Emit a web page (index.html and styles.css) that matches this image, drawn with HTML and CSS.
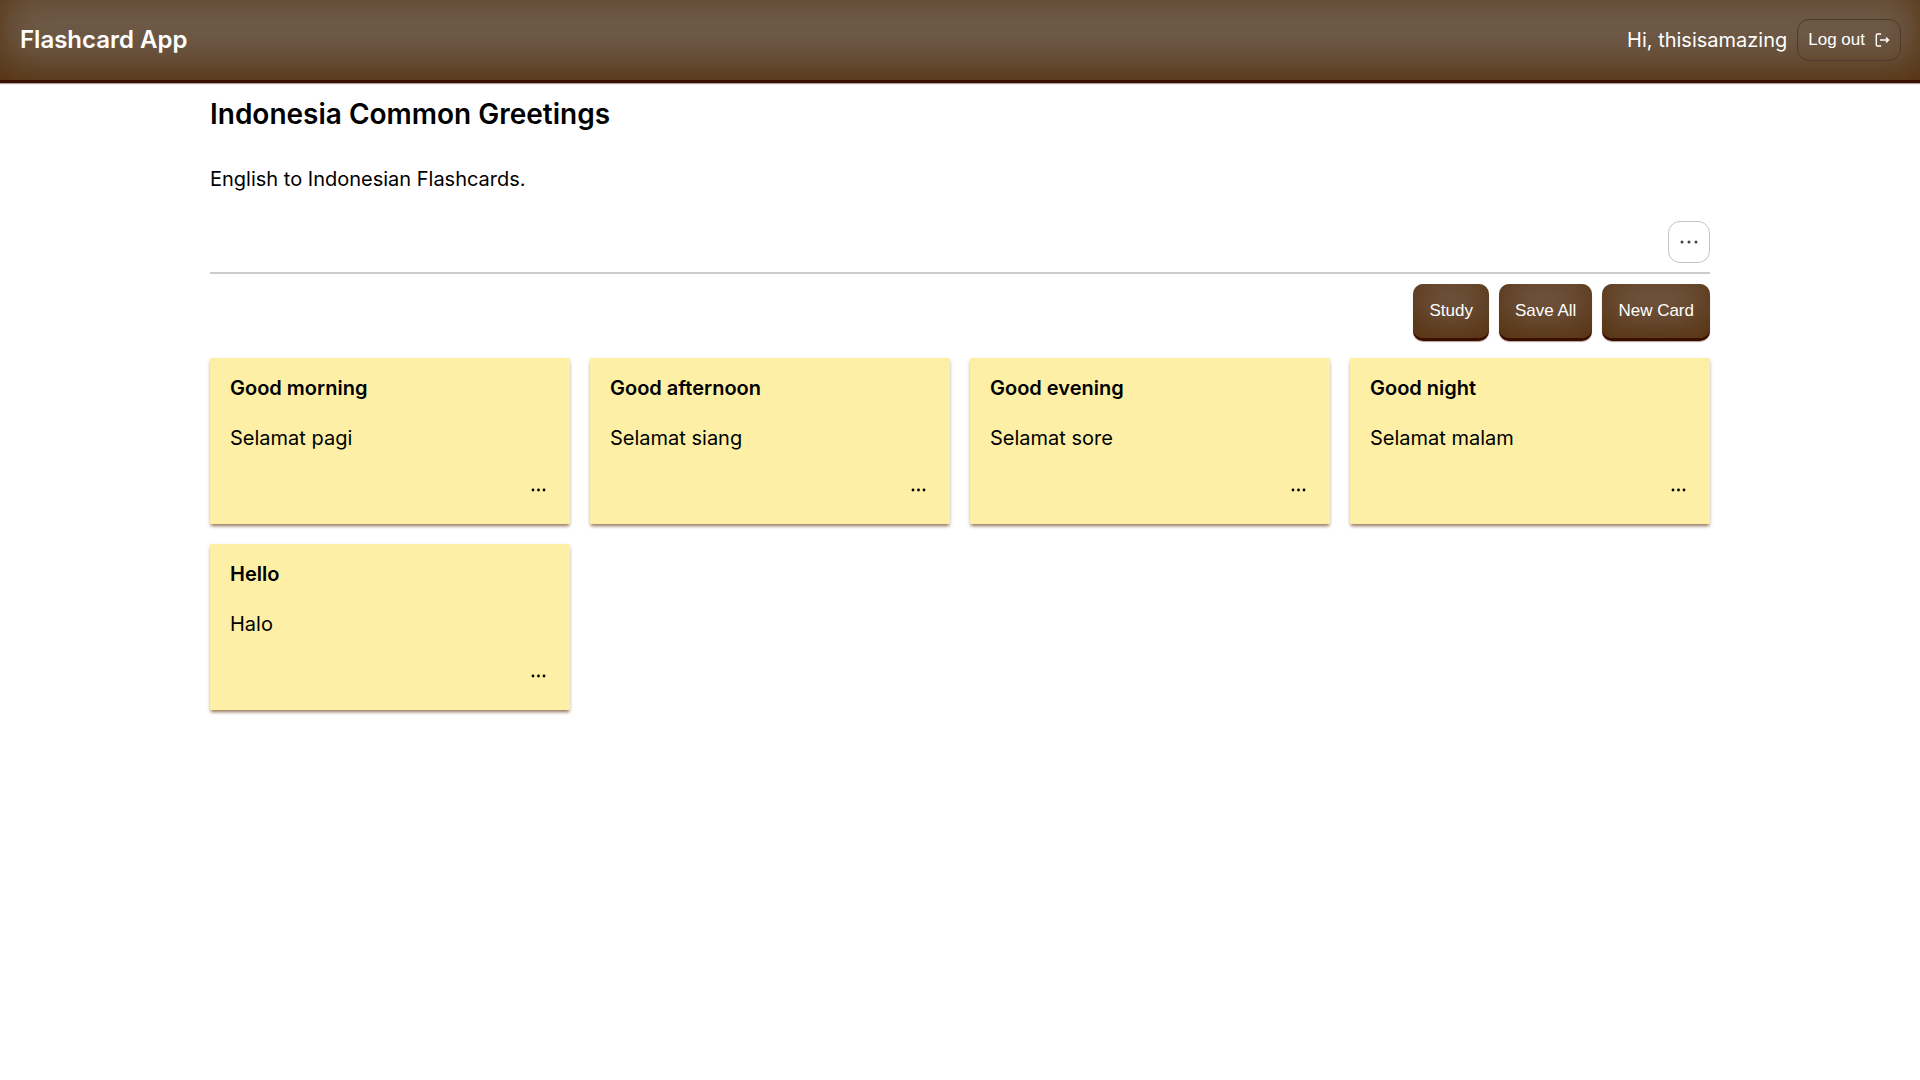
FILE: index.html
```html
<!DOCTYPE html>
<html lang="en">
<head>
<meta charset="utf-8">
<meta name="viewport" content="width=device-width, initial-scale=1">
<title>Flashcard App</title>
<link rel="stylesheet" href="styles.css">
</head>
<body>
<header class="header">
  <a class="brand" href="#">Flashcard App</a>
  <div class="account">
    <span>Hi, thisisamazing</span>
    <button class="logout" type="button">
      Log out
      <svg class="logout-icon" viewBox="0 0 16 16" aria-hidden="true"><path d="M7.2 2H3.5a1.2 1.2 0 0 0-1.2 1.2v9.6a1.2 1.2 0 0 0 1.2 1.2h3.7M6 8h8.6M12 5.4L14.6 8 12 10.6"/></svg>
    </button>
  </div>
</header>
<main class="main">
  <section class="deck">
    <h1 class="deck-title">Indonesia Common Greetings</h1>
    <p class="deck-text">English to Indonesian Flashcards.</p>
    <button class="deck-menu" type="button" aria-label="Deck options">
      <svg class="deck-dots" viewBox="0 0 18 4" aria-hidden="true"><circle cx="2" cy="2" r="1.5"/><circle cx="9" cy="2" r="1.5"/><circle cx="16" cy="2" r="1.5"/></svg>
    </button>
  </section>
  <div class="actions">
    <button class="action" type="button">Study</button>
    <button class="action" type="button">Save All</button>
    <button class="action" type="button">New Card</button>
  </div>
  <div class="cards">
    <article class="card">
      <h2 class="card-front">Good morning</h2>
      <p class="card-back">Selamat pagi</p>
      <button class="card-menu" type="button" aria-label="Card options"><svg class="card-dots" viewBox="0 0 15 4" aria-hidden="true"><circle cx="2" cy="2" r="1.4"/><circle cx="7.5" cy="2" r="1.4"/><circle cx="13" cy="2" r="1.4"/></svg></button>
    </article>
    <article class="card">
      <h2 class="card-front">Good afternoon</h2>
      <p class="card-back">Selamat siang</p>
      <button class="card-menu" type="button" aria-label="Card options"><svg class="card-dots" viewBox="0 0 15 4" aria-hidden="true"><circle cx="2" cy="2" r="1.4"/><circle cx="7.5" cy="2" r="1.4"/><circle cx="13" cy="2" r="1.4"/></svg></button>
    </article>
    <article class="card">
      <h2 class="card-front">Good evening</h2>
      <p class="card-back">Selamat sore</p>
      <button class="card-menu" type="button" aria-label="Card options"><svg class="card-dots" viewBox="0 0 15 4" aria-hidden="true"><circle cx="2" cy="2" r="1.4"/><circle cx="7.5" cy="2" r="1.4"/><circle cx="13" cy="2" r="1.4"/></svg></button>
    </article>
    <article class="card">
      <h2 class="card-front">Good night</h2>
      <p class="card-back">Selamat malam</p>
      <button class="card-menu" type="button" aria-label="Card options"><svg class="card-dots" viewBox="0 0 15 4" aria-hidden="true"><circle cx="2" cy="2" r="1.4"/><circle cx="7.5" cy="2" r="1.4"/><circle cx="13" cy="2" r="1.4"/></svg></button>
    </article>
    <article class="card">
      <h2 class="card-front">Hello</h2>
      <p class="card-back">Halo</p>
      <button class="card-menu" type="button" aria-label="Card options"><svg class="card-dots" viewBox="0 0 15 4" aria-hidden="true"><circle cx="2" cy="2" r="1.4"/><circle cx="7.5" cy="2" r="1.4"/><circle cx="13" cy="2" r="1.4"/></svg></button>
    </article>
  </div>
</main>
</body>
</html>
```
FILE: styles.css
```css
* {
  box-sizing: border-box;
}

body {
  margin: 0;
  background: #fff;
  color: #000;
  font: 400 20px/30px Inter, sans-serif;
}

h1, h2, p {
  margin: 0;
}

button {
  font: 400 17px/20px "Liberation Sans", Arial, sans-serif;
  cursor: pointer;
}

.header {
  display: flex;
  align-items: center;
  justify-content: space-between;
  padding: 19px 19px 19px 20px;
  color: #fff;
  background: #6e5a48;
  box-shadow: inset 0 -12px 40px #54300c, 0 3px 0 #3b0f00, 0 4px 1px #3b0f0066;
}

.brand {
  color: inherit;
  font-size: 24px;
  font-weight: 600;
  text-decoration: none;
}

.account {
  display: flex;
  align-items: center;
  gap: 10px;
}

.logout {
  display: flex;
  align-items: center;
  gap: 9px;
  padding: 10px;
  border: 1px solid #4b3a2d;
  border-radius: 12px;
  background: transparent;
  color: #fff;
}

.logout-icon {
  width: 16px;
  height: 16px;
  fill: none;
  stroke: currentColor;
  stroke-width: 1.4;
}

.main {
  max-width: 1540px;
  margin: 0 auto;
  padding: 14px 20px 20px;
}

.deck {
  display: flex;
  flex-direction: column;
  padding-bottom: 9px;
  border-bottom: 2px solid #ccc;
}

.deck-title {
  font-size: 28px;
  font-weight: 600;
  line-height: 40px;
}

.deck-text {
  margin-top: 30px;
}

.deck-menu {
  display: flex;
  align-items: center;
  justify-content: center;
  align-self: flex-end;
  width: 42px;
  height: 42px;
  margin-top: 27px;
  border: 1px solid #c4c4c4;
  border-radius: 12px;
  background: #fff;
  padding: 0;
}

.deck-dots {
  width: 18px;
  height: 4px;
  fill: #444;
}

.actions {
  display: flex;
  justify-content: flex-end;
  gap: 10px;
  margin: 10px 0 20px;
}

.action {
  padding: 17px 16px;
  border: 0;
  border-radius: 10px;
  color: #fff;
  background: #725744;
  box-shadow: inset 0 -12px 40px #54300c, 0 3px 0 #3b0f00, 0 4px 1px #3b0f0066;
}

.cards {
  display: grid;
  grid-template-columns: repeat(auto-fill, minmax(300px, 1fr));
  gap: 20px;
}

.card {
  display: flex;
  flex-direction: column;
  padding: 15px 20px 20px;
  border-radius: 1px;
  background: #fdf0a6;
  box-shadow: 0 3px 3px -1px #7a461aaa, 0 2px 4px #00000020;
}

.card-front {
  font-size: 20px;
  font-weight: 600;
}

.card-back {
  margin-top: 20px;
}

.card-menu {
  display: flex;
  align-self: flex-end;
  margin-top: 20px;
  padding: 15px 4px 12px;
  border: 0;
  background: transparent;
}

.card-dots {
  width: 15px;
  height: 4px;
  fill: #000;
}
```
